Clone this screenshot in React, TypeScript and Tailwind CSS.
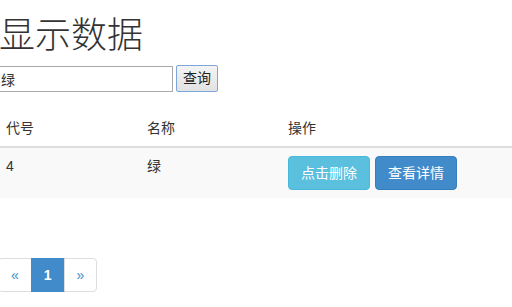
import React from 'react';

const cjk = '"Liberation Sans", "Noto Sans CJK SC", sans-serif';

export default function App() {
  return (
    <div className="w-[512px] h-[307px] overflow-hidden bg-white text-[#333]" style={{ fontFamily: cjk }}>
      <div className="ml-[-2px] w-[540px]">
        <h1 className="mt-[16px] mb-[9px] pl-[1px] text-[36px] leading-[40px] font-light">显示数据</h1>

        <div className="flex items-center gap-[3px]">
          <input
            defaultValue="绿"
            className="h-[26px] w-[175px] border border-[#a9a9a9] pl-[2px] text-[14px] outline-none"
          />
          <button className="h-[27px] rounded-[2px] border border-[#7ba7d9] bg-gradient-to-b from-[#f4f4f4] to-[#e2e2e2] px-[6px] text-[14px] text-[#222]">
            查询
          </button>
        </div>

        <table className="mt-[18px] w-full border-collapse text-[14px] leading-[20px]">
          <thead>
            <tr className="border-b-2 border-[#ddd]">
              <th className="w-[141px] p-2 text-left font-normal">代号</th>
              <th className="w-[141px] p-2 text-left font-normal">名称</th>
              <th className="p-2 text-left font-normal">操作</th>
            </tr>
          </thead>
          <tbody>
            <tr className="bg-[#f9f9f9]">
              <td className="p-2 align-top">4</td>
              <td className="p-2 align-top">绿</td>
              <td className="p-2 align-top">
                <div className="flex gap-[5px]">
                  <button className="h-[34px] rounded-[4px] border border-[#46b8da] bg-[#5bc0de] px-3 text-white">点击删除</button>
                  <button className="h-[34px] rounded-[4px] border border-[#357ebd] bg-[#428bca] px-3 text-white">查看详情</button>
                </div>
              </td>
            </tr>
          </tbody>
        </table>

        <div className="mt-[60px] flex text-[14px] leading-[20px]">
          <span className="rounded-l-[4px] border border-[#ddd] px-3 py-[6px] text-[#428bca]">«</span>
          <span className="ml-[-1px] border border-[#428bca] bg-[#428bca] px-3 py-[6px] font-bold text-white">1</span>
          <span className="ml-[-1px] rounded-r-[4px] border border-[#ddd] px-3 py-[6px] text-[#428bca]">»</span>
        </div>
      </div>
    </div>
  );
}
